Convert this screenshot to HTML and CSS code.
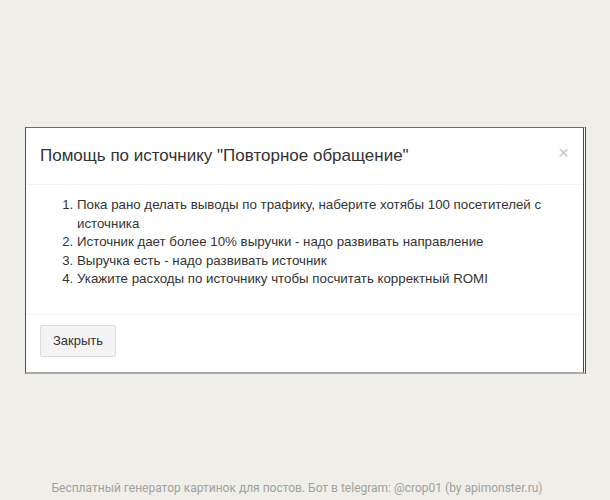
FILE: index.html
```html
<!DOCTYPE html>
<html lang="ru">
<head>
<meta charset="utf-8">
<title>Помощь по источнику</title>
<link rel="stylesheet" href="styles.css">
</head>
<body>
<div class="page">
  <div class="modal">
    <div class="modal-header">
      <h4 class="modal-title">Помощь по источнику "Повторное обращение"</h4>
      <span class="close">×</span>
    </div>
    <div class="modal-body">
      <ol class="tips">
        <li>Пока рано делать выводы по трафику, наберите хотябы 100 посетителей с источника</li>
        <li>Источник дает более 10% выручки - надо развивать направление</li>
        <li>Выручка есть - надо развивать источник</li>
        <li>Укажите расходы по источнику чтобы посчитать корректный ROMI</li>
      </ol>
    </div>
    <div class="modal-footer">
      <button class="btn">Закрыть</button>
    </div>
  </div>
  <p class="caption">Бесплатный генератор картинок для постов. Бот в telegram: @crop01 (by apimonster.ru)</p>
</div>
</body>
</html>
```

FILE: styles.css
```css
html, body {
  margin: 0;
  padding: 0;
  background: #efeee9;
}

.page {
  height: 500px;
  display: flex;
  flex-direction: column;
  box-sizing: border-box;
  padding-top: 127px;
}

.modal {
  margin-left: 25px;
  width: 561px;
  box-sizing: border-box;
  background: #fff;
  border-left: 1px solid #555;
  border-top: 1px solid #6a6a6a;
  border-right: 3px double #4a4a4a;
  border-bottom: 2px solid #aaa;
  font-family: "Liberation Sans", Arial, sans-serif;
  color: #333;
}

.modal-header {
  position: relative;
  padding: 15px 14px;
  border-bottom: 1px solid #f3f3f3;
}

.modal-title {
  margin: 0;
  font-size: 17px;
  font-weight: normal;
  line-height: 26px;
}

.close {
  position: absolute;
  right: 14px;
  top: 12px;
  font-size: 19px;
  line-height: 26px;
  color: #c8c8c8;
}

.modal-body {
  padding: 11px 14px 0;
}

.tips {
  margin: 0 0 25px;
  padding-left: 37px;
  font-size: 13.3px;
  line-height: 18.6px;
}

.modal-footer {
  padding: 10px 14px 15px;
  border-top: 1px solid #f4f4f4;
}

.btn {
  font-family: "Liberation Sans", Arial, sans-serif;
  font-size: 13px;
  color: #333;
  background: #f4f4f4;
  border: 1px solid #dcdcdc;
  border-radius: 2px;
  height: 32px;
  padding: 0 12px;
}

.caption {
  margin: auto 0 4px;
  padding-right: 16px;
  text-align: center;
  font-family: Roboto, "Liberation Sans", sans-serif;
  font-size: 12px;
  color: #a2a29e;
  line-height: 16px;
}
```
